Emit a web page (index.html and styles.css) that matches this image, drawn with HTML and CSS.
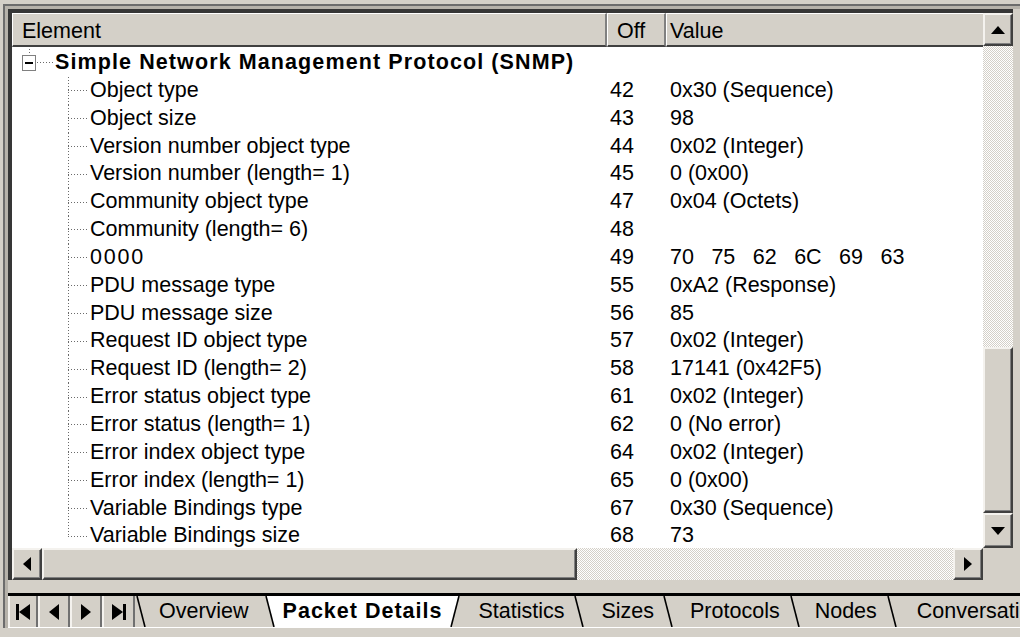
FILE: index.html
```html
<!DOCTYPE html>
<html>
<head>
<meta charset="utf-8">
<title>Packet Details</title>
<link rel="stylesheet" href="styles.css">
</head>
<body>
<div class="window">
  <div class="frame">
    <div class="frame-inner">
      <div class="listview">
        <div class="table">
          <div class="header">
            <div class="hcell h-el">Element</div>
            <div class="hcell h-off">Off</div>
            <div class="hcell h-val">Value</div>
          </div>
          <div class="rows">
            <div class="row">
              <div class="el">
                <span class="toggle"><svg width="14" height="16" viewBox="0 0 14 16"><rect x="0.5" y="0.5" width="13" height="15" fill="#fff" stroke="#808080"/><rect x="3" y="7" width="8" height="2" fill="#000"/></svg></span>
                <span class="root-line"></span>
                <span class="name bold">Simple Network Management Protocol (SNMP)</span>
              </div>
              <div class="off"></div>
              <div class="val"></div>
            </div>
            <div class="row"><div class="el"><span class="branch"></span><span class="name">Object type</span></div><div class="off">42</div><div class="val">0x30 (Sequence)</div></div>
            <div class="row"><div class="el"><span class="branch"></span><span class="name">Object size</span></div><div class="off">43</div><div class="val">98</div></div>
            <div class="row"><div class="el"><span class="branch"></span><span class="name">Version number object type</span></div><div class="off">44</div><div class="val">0x02 (Integer)</div></div>
            <div class="row"><div class="el"><span class="branch"></span><span class="name">Version number (length= 1)</span></div><div class="off">45</div><div class="val">0 (0x00)</div></div>
            <div class="row"><div class="el"><span class="branch"></span><span class="name">Community object type</span></div><div class="off">47</div><div class="val">0x04 (Octets)</div></div>
            <div class="row"><div class="el"><span class="branch"></span><span class="name">Community (length= 6)</span></div><div class="off">48</div><div class="val"></div></div>
            <div class="row"><div class="el"><span class="branch"></span><span class="name digits">0000</span></div><div class="off">49</div><div class="val bytes">70 75 62 6C 69 63</div></div>
            <div class="row"><div class="el"><span class="branch"></span><span class="name">PDU message type</span></div><div class="off">55</div><div class="val">0xA2 (Response)</div></div>
            <div class="row"><div class="el"><span class="branch"></span><span class="name">PDU message size</span></div><div class="off">56</div><div class="val">85</div></div>
            <div class="row"><div class="el"><span class="branch"></span><span class="name">Request ID object type</span></div><div class="off">57</div><div class="val">0x02 (Integer)</div></div>
            <div class="row"><div class="el"><span class="branch"></span><span class="name">Request ID (length= 2)</span></div><div class="off">58</div><div class="val">17141 (0x42F5)</div></div>
            <div class="row"><div class="el"><span class="branch"></span><span class="name">Error status object type</span></div><div class="off">61</div><div class="val">0x02 (Integer)</div></div>
            <div class="row"><div class="el"><span class="branch"></span><span class="name">Error status (length= 1)</span></div><div class="off">62</div><div class="val">0 (No error)</div></div>
            <div class="row"><div class="el"><span class="branch"></span><span class="name">Error index object type</span></div><div class="off">64</div><div class="val">0x02 (Integer)</div></div>
            <div class="row"><div class="el"><span class="branch"></span><span class="name">Error index (length= 1)</span></div><div class="off">65</div><div class="val">0 (0x00)</div></div>
            <div class="row"><div class="el"><span class="branch"></span><span class="name">Variable Bindings type</span></div><div class="off">67</div><div class="val">0x30 (Sequence)</div></div>
            <div class="row"><div class="el"><span class="branch last"></span><span class="name">Variable Bindings size</span></div><div class="off">68</div><div class="val">73</div></div>
          </div>
        </div>
        <div class="vscroll">
          <div class="sbtn up"><svg width="14" height="8" viewBox="0 0 14 8"><polygon points="0,8 7,0 14,8" fill="#000"/></svg></div>
          <div class="track"></div>
          <div class="thumb vthumb"></div>
          <div class="sbtn down"><svg width="14" height="8" viewBox="0 0 14 8"><polygon points="0,0 7,8 14,0" fill="#000"/></svg></div>
        </div>
        <div class="hscroll">
          <div class="sbtn left"><svg width="8" height="14" viewBox="0 0 8 14"><polygon points="8,0 0,7 8,14" fill="#000"/></svg></div>
          <div class="thumb hthumb"></div>
          <div class="track"></div>
          <div class="sbtn right"><svg width="8" height="14" viewBox="0 0 8 14"><polygon points="0,0 8,7 0,14" fill="#000"/></svg></div>
        </div>
        <div class="corner"></div>
      </div>

      <div class="tabbar">
        <div class="nav">
          <div class="nbtn n1"><svg width="14" height="16" viewBox="0 0 14 16"><rect x="0" y="0" width="3" height="16" fill="#000"/><polygon points="14,0 3,8 14,16" fill="#000"/></svg></div>
          <div class="nbtn n2"><svg width="10" height="16" viewBox="0 0 10 16"><polygon points="10,0 0,8 10,16" fill="#000"/></svg></div>
          <div class="nbtn n3"><svg width="10" height="16" viewBox="0 0 10 16"><polygon points="0,0 10,8 0,16" fill="#000"/></svg></div>
          <div class="nbtn n4"><svg width="14" height="16" viewBox="0 0 14 16"><polygon points="0,0 11,8 0,16" fill="#000"/><rect x="11" y="0" width="3" height="16" fill="#000"/></svg></div>
        </div>
        <svg class="sep" width="11" height="31" viewBox="0 0 11 31"><polygon points="0,0 2,0 10,31 0,31" fill="#d4d0c8"/><polygon points="2,0 11,0 11,31 10,31" fill="#d4d0c8"/><line x1="2" y1="0" x2="10" y2="31" stroke="#000" stroke-width="1.6"/></svg>
        <div class="tab t-over">Overview</div>
        <svg class="sep" width="11" height="31" viewBox="0 0 11 31"><polygon points="0,0 2,0 10,31 0,31" fill="#d4d0c8"/><polygon points="2,0 11,0 11,31 10,31" fill="#fff"/><line x1="2" y1="0" x2="10" y2="31" stroke="#000" stroke-width="1.6"/></svg>
        <div class="tab active t-pack">Packet Details</div>
        <svg class="sep" width="11" height="31" viewBox="0 0 11 31"><polygon points="0,0 9,0 1,31 0,31" fill="#fff"/><polygon points="9,0 11,0 11,31 1,31" fill="#d4d0c8"/><line x1="9" y1="0" x2="1" y2="31" stroke="#000" stroke-width="1.6"/></svg>
        <div class="tab t-stat">Statistics</div>
        <svg class="sep" width="11" height="31" viewBox="0 0 11 31"><line x1="2" y1="0" x2="10" y2="31" stroke="#000" stroke-width="1.6"/></svg>
        <div class="tab t-size">Sizes</div>
        <svg class="sep" width="11" height="31" viewBox="0 0 11 31"><line x1="2" y1="0" x2="10" y2="31" stroke="#000" stroke-width="1.6"/></svg>
        <div class="tab t-prot">Protocols</div>
        <svg class="sep" width="11" height="31" viewBox="0 0 11 31"><line x1="2" y1="0" x2="10" y2="31" stroke="#000" stroke-width="1.6"/></svg>
        <div class="tab t-node">Nodes</div>
        <svg class="sep" width="11" height="31" viewBox="0 0 11 31"><line x1="2" y1="0" x2="10" y2="31" stroke="#000" stroke-width="1.6"/></svg>
        <div class="tab t-conv">Conversations</div>
      </div>
    </div>
  </div>
</div>
</body>
</html>
```

FILE: styles.css
```css
* { box-sizing: border-box; }
html, body { margin: 0; padding: 0; }
body {
  width: 1020px;
  height: 637px;
  overflow: hidden;
  background: #d4d0c8;
  font-family: "Liberation Sans", Arial, sans-serif;
  font-size: 21.5px;
  color: #000;
}
.window { padding: 4px 0 0 3px; height: 637px; }
.frame {
  border-top: 2px solid #6c6c6c;
  border-left: 2px solid #6c6c6c;
}
.frame-inner {
  border-top: 3px solid #b6b2aa;
  border-left: 3px solid #b6b2aa;
}
.listview {
  width: 1005px;
  border-top: 4px solid #363636;
  border-left: 4px solid #363636;
  display: grid;
  grid-template-columns: 971px 30px;
  grid-template-rows: 535px 32px;
  background: #fff;
}
.table { overflow: hidden; }
.header {
  display: grid;
  grid-template-columns: 595px 59px 317px;
  height: 34px;
  background: #d4d0c8;
}
.hcell {
  border-top: 1px solid #fff;
  border-left: 1px solid #fff;
  border-right: 2px solid #808080;
  border-bottom: 2px solid #404040;
  line-height: 35px;
  white-space: nowrap;
  overflow: hidden;
}
.h-el { padding-left: 9px; }
.h-off { padding-left: 9px; }
.h-val { padding-left: 3px; border-right: none; }

.rows { display: flex; flex-direction: column; padding-top: 2px; }
.row {
  display: grid;
  grid-template-columns: 595px 59px 317px;
  height: 27.85px;
  line-height: 27.85px;
  white-space: nowrap;
  flex: none;
}
.el { display: flex; align-items: stretch; }
.off { padding-left: 3px; }
.val { padding-left: 4px; white-space: pre; }
.bytes { word-spacing: 11.5px; }
.digits { letter-spacing: 1.8px; }
.bold { font-weight: bold; letter-spacing: 1.1px; }

.toggle {
  width: 14px;
  margin-left: 10px;
  display: flex;
  align-items: center;
  background-image: repeating-linear-gradient(to bottom, #6a6a6a 0 1px, transparent 1px 3px);
  background-size: 1px 6px;
  background-position: 7px 0;
  background-repeat: no-repeat;
}
.toggle svg { display: block; }
.root-line {
  width: 17px;
  margin-right: 2px;
  background-image: repeating-linear-gradient(to right, #6a6a6a 0 1px, transparent 1px 3px);
  background-size: 100% 1px;
  background-position: 1px 50%;
  background-repeat: no-repeat;
}
.branch {
  width: 20px;
  margin-left: 56px;
  margin-right: 2px;
  background-image:
    repeating-linear-gradient(to bottom, #6a6a6a 0 1px, transparent 1px 3px),
    repeating-linear-gradient(to right, #6a6a6a 0 1px, transparent 1px 3px);
  background-size: 1px 100%, 100% 1px;
  background-position: 0 0, 0 50%;
  background-repeat: no-repeat;
}
.branch.last { background-size: 1px 50%, 100% 1px; }

.sbtn {
  background: #d4d0c8;
  border-top: 2px solid #f4f2ee;
  border-left: 2px solid #f4f2ee;
  border-right: 2px solid #404040;
  border-bottom: 2px solid #404040;
  box-shadow: inset -1px -1px 0 #808080;
  display: flex;
  align-items: center;
  justify-content: center;
}
.sbtn svg { display: block; }
.thumb {
  background: #d4d0c8;
  border-top: 2px solid #f4f2ee;
  border-left: 2px solid #f4f2ee;
  border-right: 2px solid #404040;
  border-bottom: 2px solid #404040;
  box-shadow: inset -1px -1px 0 #808080;
}
.track {
  flex: 1;
  background: repeating-conic-gradient(#d4d0c8 0 25%, #ffffff 0 50%) 0 0 / 2px 2px;
}
.vscroll { display: flex; flex-direction: column; }
.vscroll .up { height: 33px; }
.vscroll .vthumb { height: 166px; }
.vscroll .down { height: 35px; }
.hscroll { display: flex; }
.hscroll .left { width: 30px; }
.hscroll .hthumb { width: 535px; }
.hscroll .right { width: 30px; }
.corner { background: #d4d0c8; }

.tabbar {
  display: flex;
  margin-top: 13px;
  height: 35px;
  border-top: 3px solid #000;
  border-bottom: 1px solid #fff;
  white-space: nowrap;
  overflow: hidden;
}
.nav { display: flex; flex: none; }
.nbtn {
  height: 31px;
  display: flex;
  align-items: center;
  justify-content: center;
  background: #d4d0c8;
  border-left: 2px solid #f4f2ee;
  border-right: 2px solid #707070;
}
.nbtn svg { display: block; }
.n1 { width: 30px; }
.n2 { width: 32px; }
.n3 { width: 32px; }
.n4 { width: 33px; }
.sep { display: block; flex: none; }
.tab {
  flex: none;
  height: 31px;
  line-height: 31px;
  padding: 0 14px;
  background: #d4d0c8;
}
.tab.active {
  background: #fff;
  font-weight: bold;
  letter-spacing: 1px;
  padding: 0 8px;
}
.t-over { padding: 0 15px 0 13px; }
.t-stat { padding: 0 9px 0 17px; }
.t-size { padding: 0 8px 0 17px; }
.t-prot { padding: 0 9px 0 17px; }
.t-node { padding: 0 9px 0 15px; }
.t-conv { padding: 0 0 0 20px; }
```
